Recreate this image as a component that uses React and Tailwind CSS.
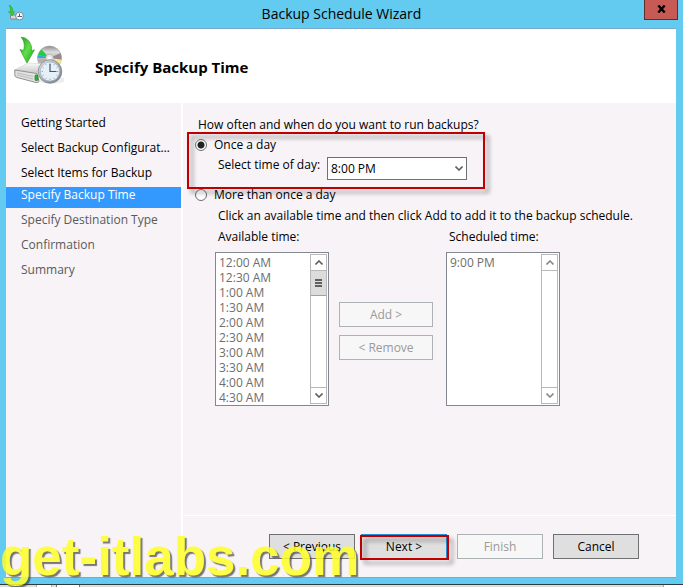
import React, { useState } from 'react';

const doneSteps = ['Getting Started', 'Select Backup Configuration', 'Select Items for Backup'];
const currentStep = 'Specify Backup Time';
const nextSteps = ['Specify Destination Type', 'Confirmation', 'Summary'];

const availableTimes = [
  '12:00 AM',
  '12:30 AM',
  '1:00 AM',
  '1:30 AM',
  '2:00 AM',
  '2:30 AM',
  '3:00 AM',
  '3:30 AM',
  '4:00 AM',
  '4:30 AM'
];

const BackupIcon = ({ className }) => (
  <svg viewBox="0 0 50 50" className={className} aria-hidden="true">
    <defs>
      <linearGradient id="arrow" x1="0" y1="0" x2="1" y2="1">
        <stop offset="0" stopColor="#1f9a1c" />
        <stop offset="0.5" stopColor="#5fe04a" />
        <stop offset="1" stopColor="#1f9a1c" />
      </linearGradient>
      <linearGradient id="disc" x1="0" y1="0" x2="0" y2="1">
        <stop offset="0" stopColor="#8c8c8c" />
        <stop offset="0.25" stopColor="#dcdcdc" />
        <stop offset="0.6" stopColor="#b4aeb2" />
        <stop offset="1" stopColor="#c4c4c4" />
      </linearGradient>
      <linearGradient id="drive" x1="0" y1="0" x2="0" y2="1">
        <stop offset="0" stopColor="#fafafa" />
        <stop offset="1" stopColor="#c9c9c9" />
      </linearGradient>
      <linearGradient id="rim" x1="0" y1="0" x2="1" y2="1">
        <stop offset="0" stopColor="#e4e8ec" />
        <stop offset="1" stopColor="#6f7880" />
      </linearGradient>
    </defs>
    <ellipse cx="38" cy="43" rx="14" ry="3.500" fill="#000" opacity="0.07" />
    <circle cx="35.500" cy="21" r="12" fill="url(#disc)" stroke="#a0a0a0" strokeWidth="0.6" />
    <path d="M35.500 21 L24 18 A12 12 0 0 1 27.500 12.500 Z" fill="#1fd03a" />
    <path d="M35.500 21 L23.600 21 A12 12 0 0 1 24 18 Z" fill="#2aa8f0" />
    <path d="M35.500 21 L47.400 22.500 A12 12 0 0 1 45 28.500 Z" fill="#f3ea8c" />
    <path d="M35.500 21 L46.500 16 A12 12 0 0 1 47.400 22.500 Z" fill="#9c8791" />
    <circle cx="35.500" cy="21" r="3.800" fill="#e8e8e8" stroke="#aaa" strokeWidth="0.7" />
    <circle cx="35.500" cy="21" r="1.300" fill="#fff" />
    <path d="M0.800 33 L14 26 L34 27 L24 36 Z" fill="url(#drive)" stroke="#cfcfcf" strokeWidth="0.6" />
    <path d="M0.800 33 L23 36.500 L25 44.500 Q24 46 22 45.500 L3 40.500 Q0.800 40 0.800 38 Z" fill="#e2e2e2" stroke="#858585" strokeWidth="0.9" />
    <path d="M3 36 L19 39.500 M3 38 L19 42" stroke="#b5b5b5" strokeWidth="0.9" fill="none" />
    <rect x="21" y="38" width="3" height="5.500" rx="1" fill="#20c02a" stroke="#0f6d16" strokeWidth="0.6" />
    <path
      d="M7 0 C14 0.500 18.500 7 17.500 14 L20.500 12.800 L13 26 L6 12.500 L9.500 13.500 C11 9 10.500 4 7 0 Z"
      fill="url(#arrow)"
      stroke="#2b8f22"
      strokeWidth="0.6"
    />
    <circle cx="36" cy="34.500" r="11.800" fill="url(#rim)" stroke="#76808a" strokeWidth="0.7" />
    <circle cx="36" cy="34.500" r="9.600" fill="#e6f0f9" stroke="#a9b4bf" strokeWidth="0.7" />
    <path
      transform="translate(-1 -1.5)"
      d="M37 27.500v1.500M37 43v1.500M28.500 36h1.500M44 36h1.500M32.800 28.700l.6 1M41.200 28.700l-.6 1M32.800 43.300l.6-1M41.200 43.300l-.6-1M29.700 31.800l1 .6M44.300 31.800l-1 .6M29.700 40.200l1-.6M44.300 40.200l-1-.6"
      stroke="#8a97a6"
      strokeWidth="0.8"
    />
    <path d="M36 27V34.500H42.500" stroke="#3d5674" strokeWidth="1.200" fill="none" />
  </svg>
);

const TitleIcon = ({ className }) => (
  <svg viewBox="0 0 16 16" className={className} aria-hidden="true">
    <rect x="2.500" y="10" width="7" height="4" rx="0.5" fill="#d8d8d8" stroke="#858585" />
    <path d="M1 0 C4 1 5 4 4.800 7 L6.500 6.500 L4 11 L0.500 6.500 L2.500 7 C2.800 4 2.200 2 1 0 Z" fill="#35d321" stroke="#2c9a1c" strokeWidth="0.5" />
    <circle cx="11.500" cy="11" r="3.900" fill="#f4f8fb" stroke="#7d8891" />
    <path d="M11.500 8.500V11.500H14M9.500 11.500h2" stroke="#45617d" fill="none" />
  </svg>
);

const Chevron = ({ up, className }) => (
  <svg viewBox="0 0 8 5" className={className} fill="none" stroke="currentColor" strokeWidth="1.6" aria-hidden="true">
    <path d={up ? 'M0.500 4.500 L4 1 L7.500 4.500' : 'M0.500 0.500 L4 4 L7.500 0.500'} />
  </svg>
);

const ScrollBar = ({ thumb }) => (
  <div
    className={`flex w-[17px] shrink-0 flex-col border border-[#b8b8b8] bg-white ${thumb ? 'text-[#606060]' : 'text-[#8a8a8a]'}`}
  >
    <div className="flex h-4 shrink-0 items-center justify-center border-b border-[#b8b8b8]">
      <Chevron up className="h-[5px] w-2" />
    </div>
    <div className="flex-1">
      {thumb && (
        <div className="flex h-[25px] flex-col items-center justify-center gap-px border-b border-[#a0a0a0] bg-[#dcdcdc]">
          <span className="h-0.5 w-[7px] bg-[#606060]" />
          <span className="h-0.5 w-[7px] bg-[#606060]" />
          <span className="h-0.5 w-[7px] bg-[#606060]" />
        </div>
      )}
    </div>
    <div className="flex h-4 shrink-0 items-center justify-center border-t border-[#b8b8b8]">
      <Chevron className="h-[5px] w-2" />
    </div>
  </div>
);

const TimeList = ({ id, label, times, thumb }) => (
  <div className="w-[114px]">
    <label htmlFor={id} className="block pl-[3px] whitespace-nowrap">
      {label}
    </label>
    <div className="mt-[7px] flex h-[154px] border border-[#828790] bg-white p-px">
      <select
        id={id}
        size={10}
        disabled
        className="min-w-0 flex-1 appearance-none overflow-hidden bg-white pl-0.5 text-[#6d6d6d] opacity-100 outline-none [scrollbar-width:none]"
      >
        {times.map((time) => (
          <option key={time} className="h-[15px] min-h-0 p-0 leading-[13px] text-[#6d6d6d]">
            {time}
          </option>
        ))}
      </select>
      <ScrollBar thumb={thumb} />
    </div>
  </div>
);

const WizardButton = ({ children, disabled, className = 'w-[86px] border-[#707070]' }) => (
  <button
    type="button"
    disabled={disabled}
    className={`h-[25px] border leading-4 disabled:border-[#adb2b5] ${
      disabled ? 'bg-[#f7f7f7] text-[#9a9a9a]' : 'bg-[#dfdfdf] text-black'
    } ${className}`}
  >
    {children}
  </button>
);

const Highlight = ({ className }) => (
  <div
    className={`pointer-events-none absolute border-2 border-[#c00000] drop-shadow-[4px_4px_2px_rgba(0,0,0,0.4)] ${className}`}
  />
);

const Radio = ({ id, checked, onChange, children }) => (
  <div className="flex items-center gap-[7px]">
    <input
      id={id}
      type="radio"
      name="frequency"
      checked={checked}
      onChange={onChange}
      className="h-3 w-3 appearance-none rounded-full border border-[#707070] bg-white bg-clip-padding checked:bg-[radial-gradient(circle,#222_3px,#fff_4px)]"
    />
    <label htmlFor={id}>{children}</label>
  </div>
);

const App = () => {
  const [frequency, setFrequency] = useState('once');

  return (
    <div className="relative flex h-screen flex-col overflow-hidden bg-[#63cbef] font-['Open_Sans','Noto_Sans',sans-serif] text-[12px] leading-4 text-black">
      <header className="relative flex h-7 shrink-0 items-center justify-center">
        <TitleIcon className="absolute top-[5px] left-2 h-4 w-4" />
        <h1 className="text-sm leading-5">Backup Schedule Wizard</h1>
        <button
          type="button"
          aria-label="Close"
          className="absolute top-0 right-[5px] flex h-5 w-[34px] items-center justify-center border border-t-0 border-[#5a2f30] bg-[#c75a54]"
        >
          <svg viewBox="0 0 9 8" className="mb-0.5 h-2 w-[9px]" stroke="#000" strokeWidth="2.400" aria-hidden="true">
            <path d="M1.300 0.500 L7.700 7.500 M7.700 0.500 L1.300 7.500" />
          </svg>
        </button>
      </header>

      <div className="mr-[7px] ml-1.5 flex min-h-0 flex-1 flex-col border-y border-[#7ba7cb] bg-[#f7f3f7]">
        <div className="flex h-[74px] shrink-0 items-center bg-white pl-2">
          <BackupIcon className="mb-2 h-[50px] w-[50px]" />
          <h2 className="mt-0.5 ml-[31px] text-[15px] leading-5 font-bold">Specify Backup Time</h2>
        </div>

        <div className="flex min-h-0 flex-1">
          <nav className="w-[177px] shrink-0 border-r-2 border-white pt-3">
            <ul className="space-y-1">
              {doneSteps.map((step) => (
                <li key={step} className="h-[21px] truncate pr-[10px] pl-[15px]">
                  {step}
                </li>
              ))}
            </ul>
            <ul className="mt-px space-y-1 text-[#5a5a5a]">
              <li aria-current="step" className="h-[21px] bg-[#3399ff] pl-[15px] text-white">
                {currentStep}
              </li>
              {nextSteps.map((step) => (
                <li key={step} className="h-[21px] pl-[15px]">
                  {step}
                </li>
              ))}
            </ul>
          </nav>

          <main className="flex min-w-0 flex-1 flex-col">
            <form className="flex-1 pt-3.5 pl-3">
              <p className="pl-[3px]">How often and when do you want to run backups?</p>
              <div className="relative mt-1">
                <Radio id="once" checked={frequency === 'once'} onChange={() => setFrequency('once')}>
                  Once a day
                </Radio>
                <div className="mt-1 flex items-start pl-[23px]">
                  <label htmlFor="time" className="w-[109px]">
                    Select time of day:
                  </label>
                  <div className="relative">
                    <select
                      id="time"
                      defaultValue="8:00 PM"
                      className="block h-[23px] w-[140px] appearance-none border border-[#707070] bg-white pl-[3px]"
                    >
                      <option>8:00 PM</option>
                      <option>9:00 PM</option>
                    </select>
                    <Chevron className="pointer-events-none absolute top-[9px] right-1 h-[5px] w-2 text-[#606060]" />
                  </div>
                </div>
                <Highlight className="-top-[5px] -left-2 h-[57px] w-[298px]" />
              </div>
              <div className="mt-[7px]">
                <Radio id="multiple" checked={frequency === 'multiple'} onChange={() => setFrequency('multiple')}>
                  More than once a day
                </Radio>
              </div>
              <p className="mt-[5px] pl-[23px]">
                Click an available time and then click Add to add it to the backup schedule.
              </p>
              <div className="mt-[5px] flex pl-5">
                <TimeList id="available" label="Available time:" times={availableTimes} thumb />
                <div className="mr-[13px] ml-2.5 flex flex-col gap-2 pt-[73px]">
                  <WizardButton disabled className="w-[94px]">
                    Add &gt;
                  </WizardButton>
                  <WizardButton disabled className="w-[94px]">
                    &lt; Remove
                  </WizardButton>
                </div>
                <TimeList id="scheduled" label="Scheduled time:" times={['9:00 PM']} />
              </div>
            </form>

            <footer className="flex h-[62px] shrink-0 justify-end gap-2.5 border-t border-white pt-[18px] pr-[37px]">
              <div className="flex gap-1.5">
                <WizardButton>&lt; Previous</WizardButton>
                <div className="relative">
                  <WizardButton className="w-[86px] border-[#2a8dd4]">Next &gt;</WizardButton>
                  <Highlight className="top-px -left-px h-[25px] w-[89px]" />
                </div>
              </div>
              <WizardButton disabled>Finish</WizardButton>
              <WizardButton>Cancel</WizardButton>
            </footer>
          </main>
        </div>
      </div>

      <div className="mt-1.5 flex h-[3px] shrink-0 border-t border-[#303840] bg-[#dedede]">
        <span className="w-9" />
        <span className="w-4 border-x border-[#aaa] bg-white" />
        <span className="ml-1 w-6 border-x border-[#777] bg-white" />
        <span className="flex-1" />
        <span className="w-5 border-l border-[#aaa] bg-white" />
      </div>

      <div className="pointer-events-none absolute bottom-0 left-0 font-['Liberation_Sans',Arial,sans-serif] text-[53px] leading-[60px] font-bold text-[#ffff26] opacity-85 [text-shadow:2px_2px_1px_rgba(60,60,60,0.8)]">
        get-itlabs.com
      </div>
    </div>
  );
};

export default App;
